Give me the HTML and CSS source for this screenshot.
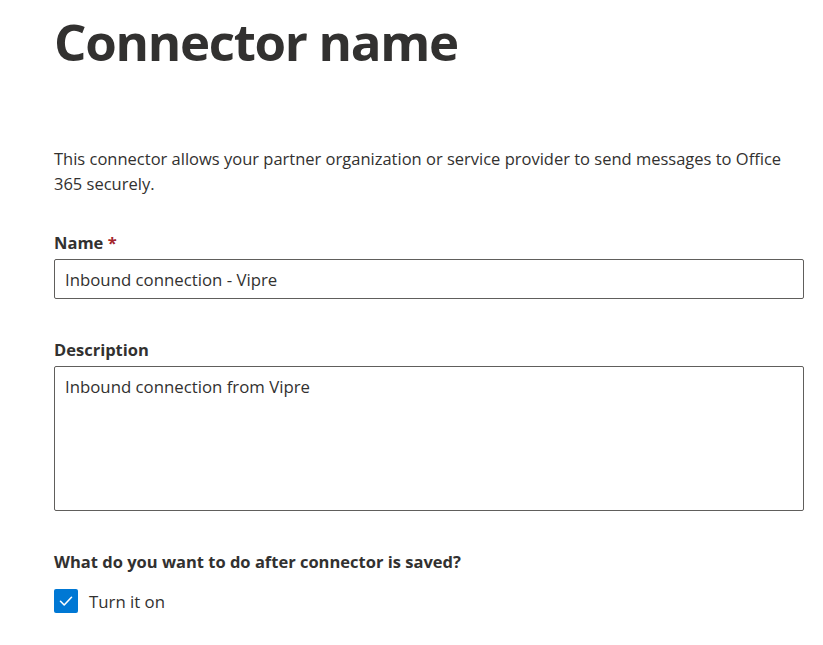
FILE: index.html
```html
<!DOCTYPE html>
<html lang="en">
<head>
<meta charset="utf-8">
<title>Connector name</title>
<link rel="stylesheet" href="styles.css">
</head>
<body>
<main class="panel">
  <h1 class="title">Connector name</h1>
  <p class="intro">This connector allows your partner organization or service provider to send messages to Office 365 securely.</p>

  <div class="field field-name">
    <label class="label" for="name">Name <span class="req">*</span></label>
    <input class="input" id="name" type="text" value="Inbound connection - Vipre">
  </div>

  <div class="field">
    <label class="label" for="desc">Description</label>
    <textarea class="textarea" id="desc">Inbound connection from Vipre</textarea>
  </div>

  <div class="field">
    <div class="label label-q">What do you want to do after connector is saved?</div>
    <label class="check">
      <span class="box">
        <svg viewBox="0 0 24 24" width="24" height="24" aria-hidden="true">
          <path d="M6.5 12.3 L10.2 16 L17.5 8.3" fill="none" stroke="#fff" stroke-width="1.6" stroke-linecap="round" stroke-linejoin="round"/>
        </svg>
      </span>
      <span class="check-text">Turn it on</span>
    </label>
  </div>
</main>
</body>
</html>
```

FILE: styles.css
```css
html, body {
  margin: 0;
  padding: 0;
  background: #ffffff;
}

body {
  font-family: "Open Sans", "Noto Sans", sans-serif;
  color: #323130;
}

.panel {
  padding: 0 19px 0 54px;
  display: flex;
  flex-direction: column;
}

.title {
  margin: 6px 0 0 0;
  font-size: 51px;
  font-weight: 700;
  line-height: 70px;
  color: #323130;
  letter-spacing: -1.3px;
}

.intro {
  margin: 70px 0 0 0;
  font-size: 16.5px;
  line-height: 25px;
  color: #323130;
}

.field {
  display: flex;
  flex-direction: column;
  margin-top: 40px;
}

.field-name {
  margin-top: 36px;
}

.label {
  font-size: 16.5px;
  font-weight: 700;
  line-height: 22px;
  margin-bottom: 5px;
  color: #323130;
}

.label-q {
  margin-bottom: 16px;
}

.req {
  color: #a4262c;
}

.input,
.textarea {
  box-sizing: border-box;
  width: 750px;
  border: 1px solid #605e5c;
  border-radius: 2px;
  font-family: inherit;
  font-size: 16.8px;
  color: #323130;
  padding: 0 10px;
  background: #fff;
  outline: none;
  margin: 0;
}

.input {
  height: 40px;
}

.textarea {
  height: 145px;
  padding-top: 9px;
  resize: none;
  line-height: 22px;
}

.check {
  display: flex;
  align-items: center;
  gap: 11px;
}

.box {
  width: 24px;
  height: 24px;
  border-radius: 2px;
  background: #0078d4;
  display: flex;
}

.check-text {
  font-size: 16.8px;
  color: #323130;
}
```
